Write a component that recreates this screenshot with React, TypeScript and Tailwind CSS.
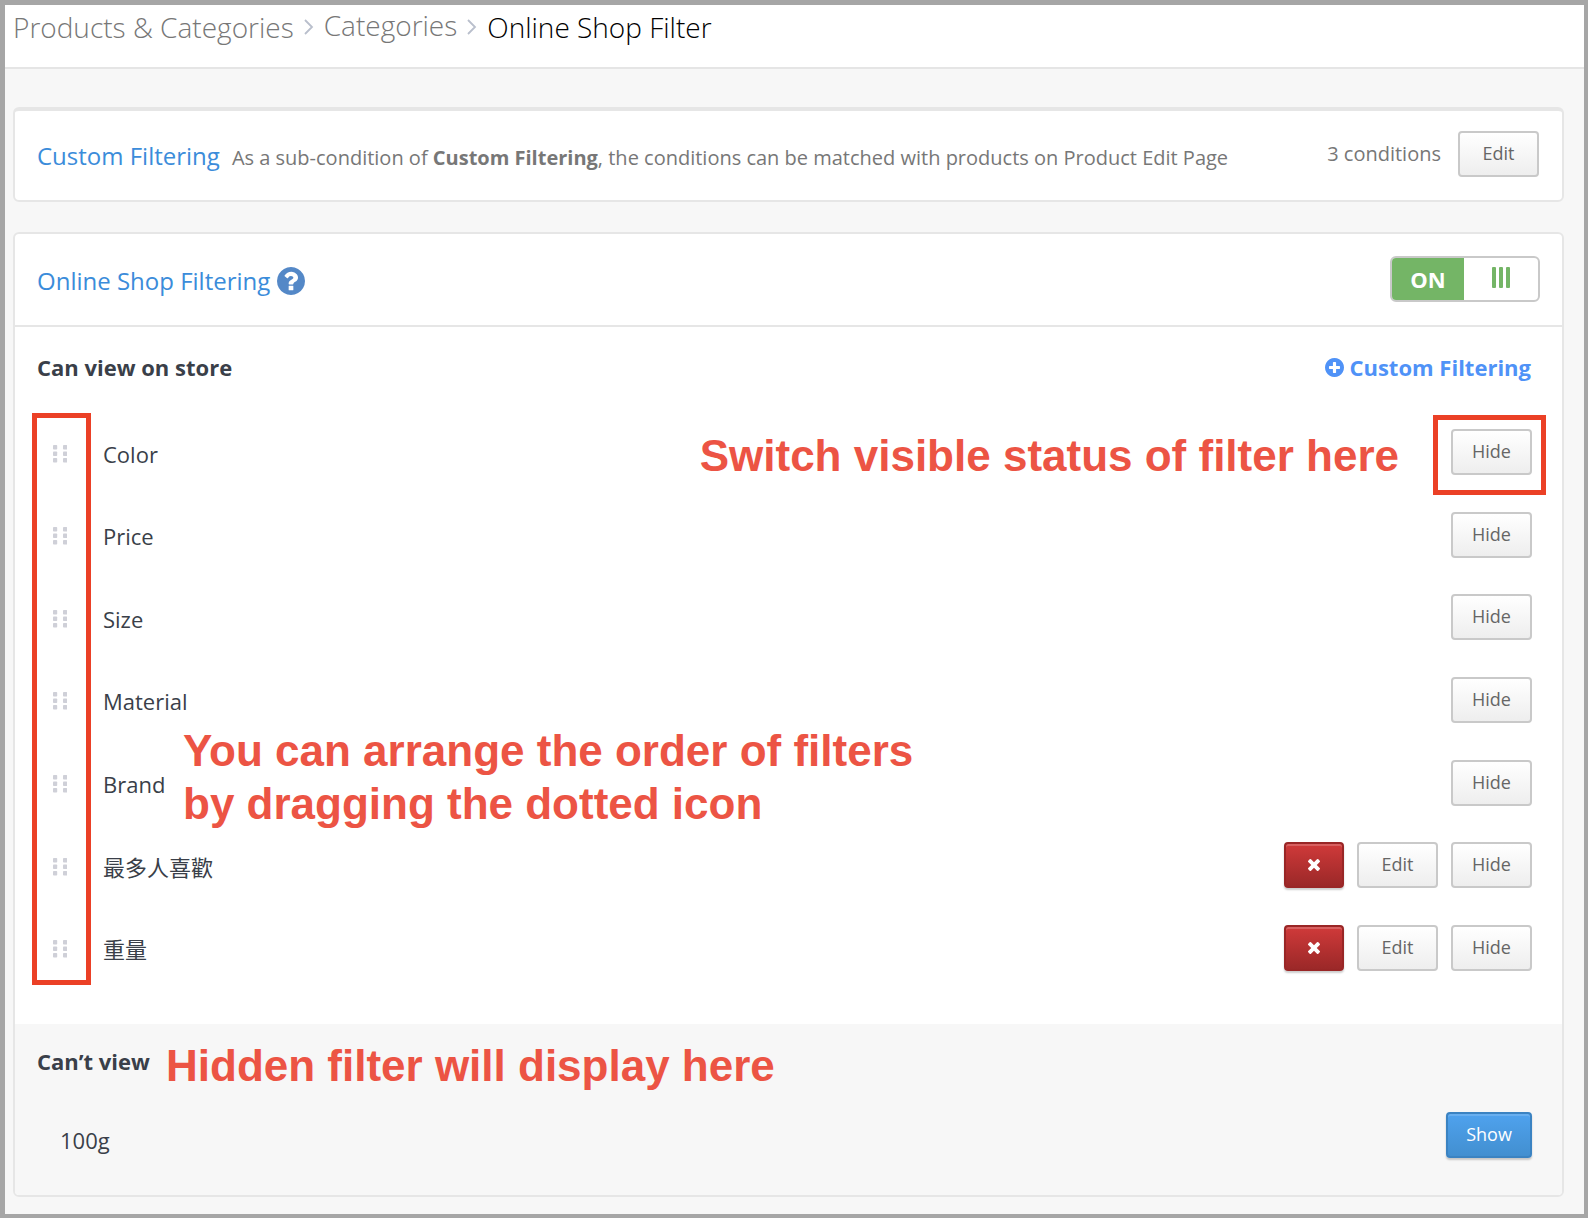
import React, { useState } from 'react';

interface Filter {
  name: string;
  custom?: boolean;
}

const filters: Filter[] = [
  { name: 'Color' },
  { name: 'Price' },
  { name: 'Size' },
  { name: 'Material' },
  { name: 'Brand' },
  { name: '最多人喜歡', custom: true },
  { name: '重量', custom: true },
];

const CIRCLE =
  'm384 192q0 209-103 385.500t-279.500 279.500-385.500 103-385.500-103-279.500-279.500-103-385.500 103-385.500 279.500-279.500 385.500-103 385.500 103 279.500 279.500 103 385.500z';

const QuestionIcon = () => (
  <svg viewBox="128 128 1536 1536" className="size-7 text-[#5488c7]" fill="currentColor" aria-hidden="true">
    <path
      d={
        'M1024 1376v-192q0-14-9-23t-23-9h-192q-14 0-23 9t-9 23v192q0 14 9 23t23 9h192q14 0 23-9t9-23zm256-672q0-88-55.500-163t-138.500-116-170-41q-243 0-371 213-15 24 8 42l132 100q7 6 19 6 16 0 25-12 53-68 86-92 34-24 86-24 48 0 85.500 26t37.500 59q0 38-20 61t-68 45q-63 28-115.500 86.500t-52.500 125.500v36q0 14 9 23t23 9h192q14 0 23-9t9-23q0-19 21.500-49.500t54.500-49.500q32-18 49-28.500t46-35 44.500-48 28-60.500 12.500-81z' +
        CIRCLE
      }
    />
  </svg>
);

const PlusIcon = () => (
  <svg viewBox="128 128 1536 1536" className="size-[19px]" fill="currentColor" aria-hidden="true">
    <path d="M1344 960v-128q0-26-19-45t-45-19h-256v-256q0-26-19-45t-45-19h-128q-26 0-45 19t-19 45v256h-256q-26 0-45 19t-19 45v128q0 26 19 45t45 19h256v256q0 26 19 45t45 19h128q26 0 45-19t19-45v-256h256q26 0 45-19t19-45zm320-64q0 209-103 385.500t-279.500 279.500-385.500 103-385.500-103-279.500-279.500-103-385.500 103-385.500 279.500-279.500 385.500-103 385.500 103 279.500 279.500 103 385.500z" />
  </svg>
);

const TimesIcon = () => (
  <svg viewBox="302 302 1188 1188" className="size-3" fill="currentColor" aria-hidden="true">
    <path d="M1490 1258q0 40-28 68l-136 136q-28 28-68 28t-68-28l-294-294-294 294q-28 28-68 28t-68-28l-136-136q-28-28-28-68t28-68l294-294-294-294q-28-28-28-68t28-68l136-136q28-28 68-28t68 28l294 294 294-294q28-28 68-28t68 28l136 136q28 28 28 68t-28 68l-294 294 294 294q28 28 28 68z" />
  </svg>
);

const GripIcon = () => (
  <svg viewBox="0 0 14 18" className="h-[18px] w-[14px]" fill="#cfd0d8" aria-hidden="true">
    {[0, 10].map((x) =>
      [0, 6.500, 13].map((y) => <rect key={`${x}-${y}`} x={x} y={y} width="4.200" height="4.600" rx="0.800" />),
    )}
  </svg>
);

const Chevron = () => (
  <svg viewBox="0 0 10 16" className="h-4 w-[10px]" fill="none" stroke="#b9bfcc" strokeWidth="1.800" aria-hidden="true">
    <path d="M1 1l7 7-7 7" />
  </svg>
);

const GreyButton = ({ children }: { children: React.ReactNode }) => (
  <button
    type="button"
    className="h-[46px] w-[81px] rounded-[4px] border-2 border-[#c9c9c9] bg-gradient-to-b from-white to-[#eeeeee] pb-0.5 text-lg leading-6 text-[#666]"
  >
    {children}
  </button>
);

// Red call-out text laid over the page
const Note = ({ className, children }: { className: string; children: React.ReactNode }) => (
  <p
    className={`pointer-events-none absolute font-['Liberation_Sans',Arial,sans-serif] text-[44px] leading-[53px] font-bold whitespace-nowrap text-[#ec5444] ${className}`}
  >
    {children}
  </p>
);

const FilterRow = ({ filter, highlight }: { filter: Filter; highlight: boolean }) => (
  <li className="relative flex items-center pr-[30px] pl-[38px]">
    <div className="flex flex-1 items-center gap-9 pt-[3px]">
      <GripIcon />
      <span className="text-[22px] leading-8 text-[#3a3f49]">{filter.name}</span>
    </div>
    <div className="flex gap-[13px]">
      {filter.custom && (
        <>
          <button
            type="button"
            aria-label={`Delete ${filter.name}`}
            className="flex h-[46px] w-[60px] items-center justify-center rounded-[4px] border-2 border-[#992626] bg-gradient-to-b from-[#d03a3a] to-[#9b2828] text-white shadow-[0_2px_2px_rgba(0,0,0,0.2),inset_0_2px_0_rgba(255,255,255,0.2)]"
          >
            <TimesIcon />
          </button>
          <GreyButton>Edit</GreyButton>
        </>
      )}
      <GreyButton>Hide</GreyButton>
    </div>
    {highlight && (
      <>
        <Note className="top-[18px] right-[163px]">Switch visible status of filter here</Note>
        <span className="pointer-events-none absolute top-1 right-4 h-20 w-[113px] border-[5px] border-[#eb4026]" />
      </>
    )}
  </li>
);

export default function App() {
  const [on, setOn] = useState(true);

  return (
    <div className="min-h-screen border-t-[5px] border-r-4 border-b-4 border-l-[5px] border-[#a6a6a6] bg-[#f7f7f7] font-['Open_Sans','Noto_Sans_CJK_TC',sans-serif]">
      <nav
        aria-label="Breadcrumb"
        className="flex items-center gap-[10px] border-b-2 border-[#e5e5e5] bg-white pb-[18px] pl-2 text-[28px] leading-[44px] font-light whitespace-nowrap text-[#777]"
      >
        <a href="#products">Products &amp; Categories</a>
        <Chevron />
        <a href="#categories" className="pb-1 leading-10">
          Categories
        </a>
        <Chevron />
        <span className="text-black">Online Shop Filter</span>
      </nav>

      <main className="pt-[38px] pr-5 pb-[17px] pl-2">
        <section className="flex items-start justify-between rounded-[6px] border-2 border-t-4 border-[#e6e6e6] bg-white pt-5 pr-[23px] pb-[21px] pl-[22px] text-xl leading-[46px] text-[#777]">
          <div className="flex items-baseline gap-3 pt-1 leading-[42px]">
            <h2 className="text-2xl leading-[42px] text-[#3b8cda]">Custom Filtering</h2>
            <p>
              As a sub-condition of <strong>Custom Filtering</strong>, the conditions can be matched with products on
              Product Edit Page
            </p>
          </div>
          <div className="flex items-start gap-[17px]">
            <span>3 conditions</span>
            <GreyButton>Edit</GreyButton>
          </div>
        </section>

        <section className="mt-[30px] rounded-[6px] border-2 border-[#e6e6e6] bg-white">
          <header className="flex items-center justify-between border-b-2 border-[#e6e6e6] px-[22px] pt-[22px] pb-[23px]">
            <div className="flex items-center gap-[7px] pt-1">
              <h2 className="text-2xl leading-[42px] text-[#3b8cda]">Online Shop Filtering</h2>
              <QuestionIcon />
            </div>
            <label className="flex h-[46px] w-[150px] overflow-hidden rounded-[6px] border-2 border-[#c9c9c9] bg-white">
              <input
                type="checkbox"
                className="sr-only"
                aria-label="Online Shop Filtering"
                checked={on}
                onChange={() => setOn(!on)}
              />
              <span className="flex w-[72px] items-center justify-center bg-[#74b566] text-[22px] leading-8 font-bold text-white">
                {on ? 'ON' : 'OFF'}
              </span>
              <span className="flex flex-1 items-start justify-center gap-[3px] pt-[9px]">
                <i className="h-[21px] w-1 rounded-[1px] bg-[#74b566]" />
                <i className="h-[21px] w-1 rounded-[1px] bg-[#74b566]" />
                <i className="h-[21px] w-1 rounded-[1px] bg-[#74b566]" />
              </span>
            </label>
          </header>

          <div className="flex items-center justify-between pt-6 pr-[31px] pb-7 pl-[22px] text-[22px] leading-8 font-bold">
            <h3 className="text-[#3a3f49]">Can view on store</h3>
            <a href="#add" className="flex items-center gap-[5px] text-[#4f92f7]">
              <PlusIcon />
              Custom Filtering
            </a>
          </div>

          <div className="relative pb-[35px]">
            <ul className="grid min-h-[578px] auto-rows-fr">
              {filters.map((f, i) => (
                <FilterRow key={f.name} filter={f} highlight={i === 0} />
              ))}
            </ul>
            <span className="pointer-events-none absolute top-[2px] left-[17px] h-[572px] w-[59px] border-[5px] border-[#eb4026]" />
            <Note className="top-[313px] left-[168px]">
              You can arrange the order of filters
              <br />
              by dragging the dotted icon
            </Note>
          </div>

          <div className="rounded-b-[4px] bg-[#f7f7f7] pt-[21px] pb-[37px] text-[22px] leading-8 text-[#3a3f49]">
            <div className="relative pl-[22px]">
              <h3 className="font-bold">Can’t view</h3>
              <Note className="-top-1.5 left-[151px]">Hidden filter will display here</Note>
            </div>
            <div className="mt-[35px] flex items-start justify-between pr-[30px] pl-[45px]">
              <span className="pt-3">100g</span>
              <button
                type="button"
                className="h-[46px] w-[86px] rounded-[4px] border-2 border-[#3b83c2] bg-gradient-to-b from-[#4fa2ee] to-[#428fd0] pb-0.5 text-lg leading-6 font-medium text-white shadow-[0_2px_2px_rgba(0,0,0,0.2),inset_0_2px_0_rgba(255,255,255,0.15)]"
              >
                Show
              </button>
            </div>
          </div>
        </section>
      </main>
    </div>
  );
}
